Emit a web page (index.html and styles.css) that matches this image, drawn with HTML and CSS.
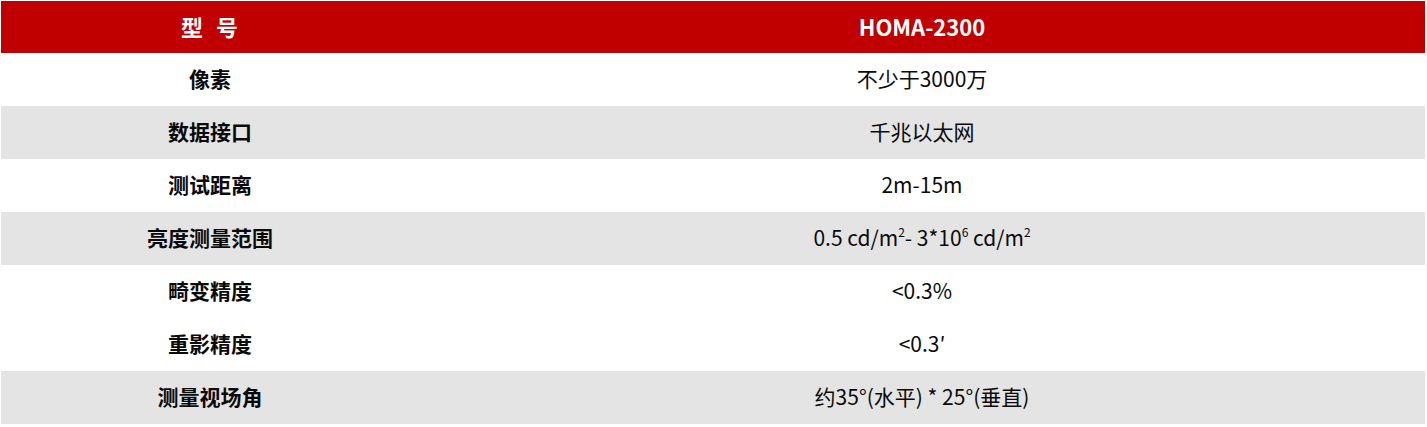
FILE: index.html
```html
<!DOCTYPE html>
<html lang="zh-CN">
<head>
<meta charset="utf-8">
<title>HOMA-2300</title>
<link rel="stylesheet" href="styles.css">
</head>
<body>
<table class="spec">
  <thead>
    <tr class="head">
      <th class="label">型&nbsp;&nbsp;号</th>
      <th class="value">HOMA-2300</th>
    </tr>
  </thead>
  <tbody>
    <tr><td class="label">像素</td><td class="value">不少于3000万</td></tr>
    <tr class="alt"><td class="label">数据接口</td><td class="value">千兆以太网</td></tr>
    <tr><td class="label">测试距离</td><td class="value">2m-15m</td></tr>
    <tr class="alt"><td class="label">亮度测量范围</td><td class="value">0.5 cd/m<sup>2</sup>- 3*10<sup>6</sup> cd/m<sup>2</sup></td></tr>
    <tr><td class="label">畸变精度</td><td class="value">&lt;0.3%</td></tr>
    <tr><td class="label">重影精度</td><td class="value">&lt;0.3′</td></tr>
    <tr class="alt"><td class="label">测量视场角</td><td class="value">约35°(水平) * 25°(垂直)</td></tr>
  </tbody>
</table>
</body>
</html>
```
FILE: styles.css
```css
html, body {
  margin: 0;
  background: #ffffff;
}
body {
  padding: 1px;
  font-family: "Noto Sans CJK SC", "Noto Sans", sans-serif;
  color: #0a0a0a;
}
.spec {
  width: 1424px;
  border-collapse: collapse;
  border-spacing: 0;
  table-layout: fixed;
}
.spec th, .spec td {
  padding: 0 0 2px 0;
  text-align: center;
  vertical-align: middle;
  font-size: 21px;
  line-height: 1;
}
.spec .label {
  width: 418px;
  font-weight: 700;
}
.spec .value {
  font-weight: 400;
}
.spec tr {
  height: 53px;
}
.spec tr.head {
  height: 52px;
  background: #c00000;
}
.spec tr.head th {
  color: #ffffff;
  font-weight: 700;
  font-size: 22px;
}
.spec tr.head th.label {
  letter-spacing: 1px;
}
.spec tr.alt {
  background: #e4e4e4;
}
.spec sup {
  font-size: 12px;
  line-height: 0;
  vertical-align: 9px;
}
```
